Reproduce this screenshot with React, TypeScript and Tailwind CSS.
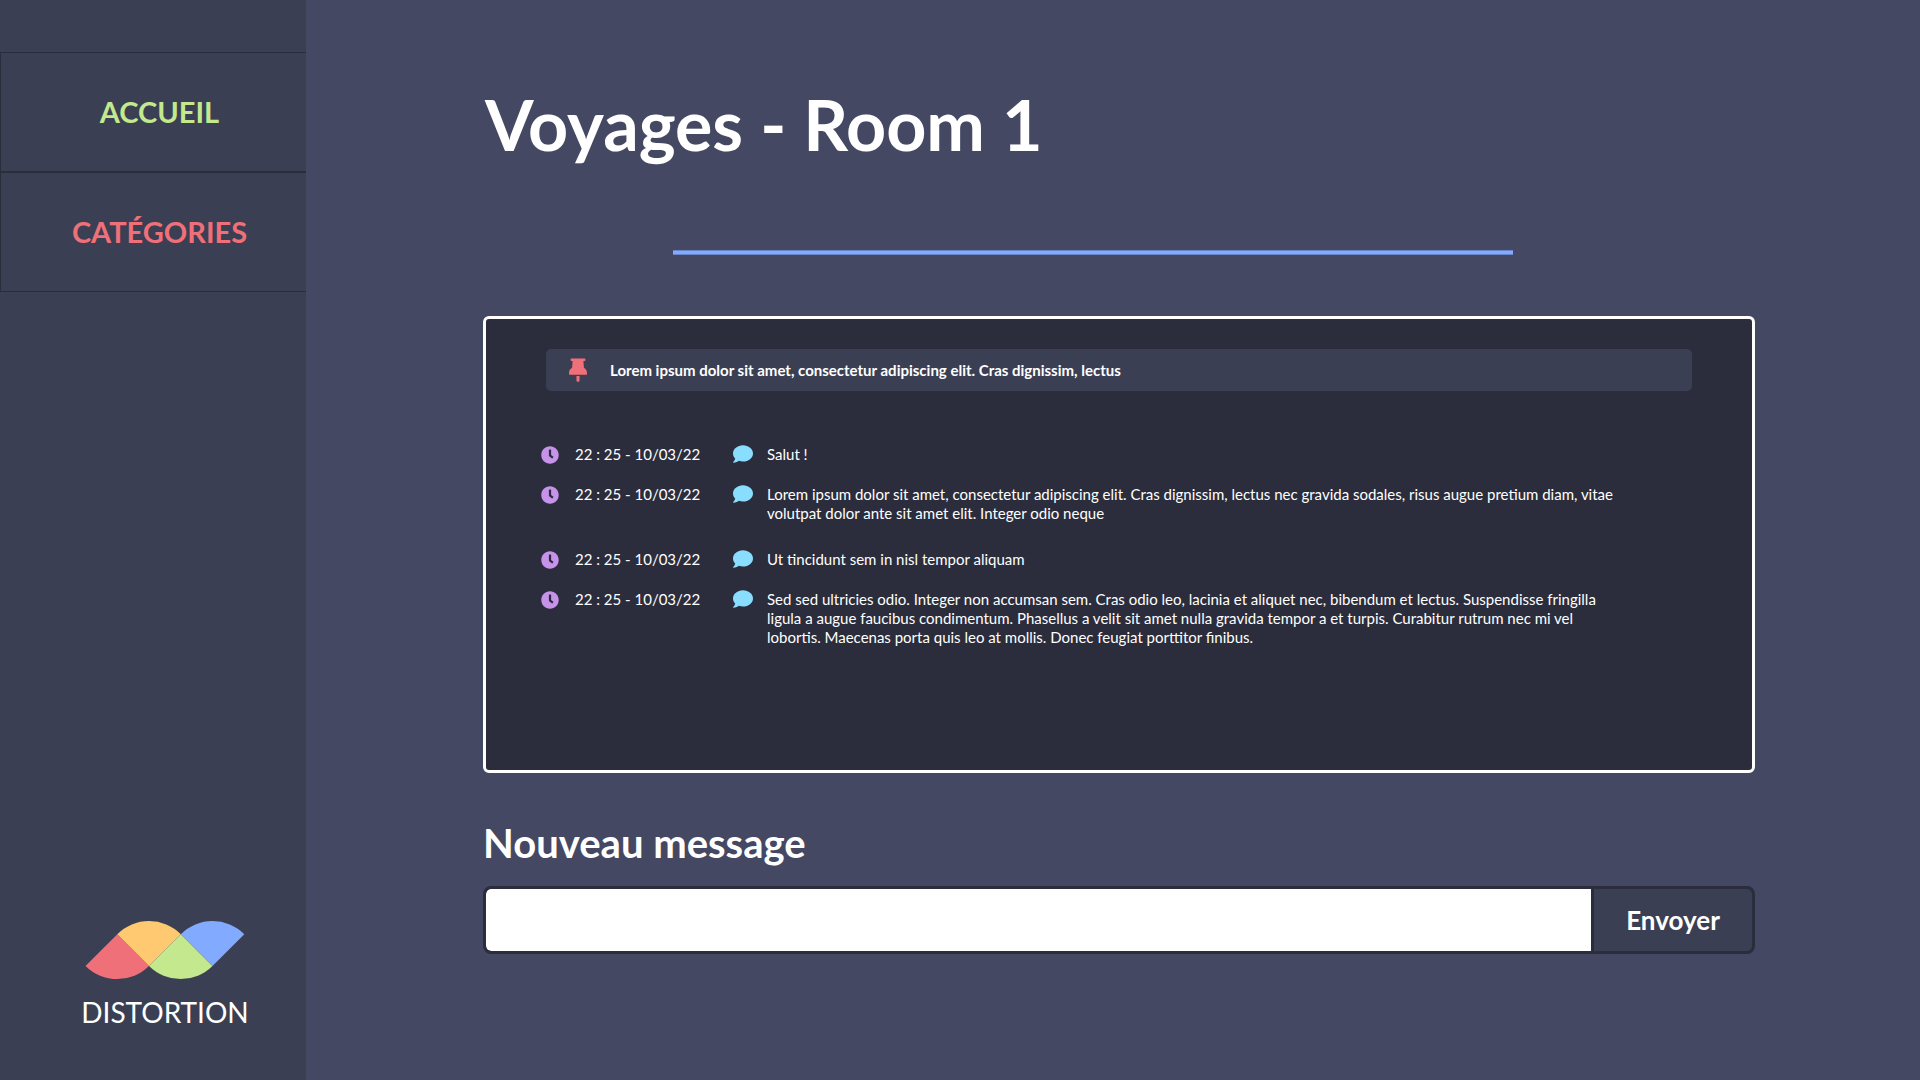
import { FaClock, FaComment } from "react-icons/fa";

type Message = { time: string; text: string; spacing: string };

const messages: Message[] = [
  { time: "22 : 25 - 10/03/22", text: "Salut !", spacing: "pb-5" },
  {
    time: "22 : 25 - 10/03/22",
    text: "Lorem ipsum dolor sit amet, consectetur adipiscing elit. Cras dignissim, lectus nec gravida sodales, risus augue pretium diam, vitae volutpat dolor ante sit amet elit. Integer odio neque",
    spacing: "pb-[26px]",
  },
  { time: "22 : 25 - 10/03/22", text: "Ut tincidunt sem in nisl tempor aliquam", spacing: "pb-5" },
  {
    time: "22 : 25 - 10/03/22",
    text: "Sed sed ultricies odio. Integer non accumsan sem. Cras odio leo, lacinia et aliquet nec, bibendum et lectus. Suspendisse fringilla ligula a augue faucibus condimentum. Phasellus a velit sit amet nulla gravida tempor a et turpis. Curabitur rutrum nec mi vel lobortis. Maecenas porta quis leo at mollis. Donec feugiat porttitor finibus.",
    spacing: "pb-[26px]",
  },
];

function PinIcon() {
  return (
    <svg width="18" height="24" viewBox="0 0 18 24" fill="currentColor" className="shrink-0 text-[#ef7078]" aria-hidden="true">
      <path d="M2.4 0.5h13.2a.8.8 0 0 1 .8.8v1a.8.8 0 0 1-.8.8h-1.2l.5 6.7c1.9 1 3.1 2.7 3.1 5.1v1a.8.8 0 0 1-.8.8H.8a.8.8 0 0 1-.8-.8v-1c0-2.4 1.2-4.1 3.1-5.1l.5-6.7H2.4a.8.8 0 0 1-.8-.8v-1a.8.8 0 0 1 .8-.8z" />
      <path d="M7.5 18h3v4.5a1.2 1.2 0 0 1-1.2 1.2h-.6a1.2 1.2 0 0 1-1.2-1.2z" />
    </svg>
  );
}

function Logo() {
  return (
    <div className="flex flex-col items-center">
      <svg width="160" height="60" viewBox="0 0 160 60" aria-hidden="true">
        <path d="M0.5 46 32.3 14.2 64 46A45 45 0 0 1 0.5 46Z" fill="#ef7078" />
        <path d="M64 46 32.3 14.2A45 45 0 0 1 95.8 14.2Z" fill="#fec970" />
        <path d="M64 46 95.8 14.2 127.5 46A45 45 0 0 1 64 46Z" fill="#c3e88d" />
        <path d="M127.5 46 95.8 14.2A45 45 0 0 1 159.3 14.2Z" fill="#82aaff" />
      </svg>
      <span className="mt-3 text-[28px] leading-10">DISTORTION</span>
    </div>
  );
}

export default function App() {
  return (
    <div className="flex min-h-screen bg-[#444862] font-['Lato',sans-serif] text-white">
      <aside className="flex w-[306px] shrink-0 flex-col justify-between bg-[#3b3f53] pt-[52px] pb-12">
        <nav className="text-[29px] font-bold">
          <a href="#accueil" className="flex h-[120px] items-center justify-center border border-r-0 border-[#2b2d3c] pl-3 text-[#c3e88d]">
            ACCUEIL
          </a>
          <a href="#categories" className="flex h-[120px] items-center justify-center border border-r-0 border-[#2b2d3c] pl-3 text-[#ef7078]">
            CATÉGORIES
          </a>
        </nav>
        <div className="pl-6">
          <Logo />
        </div>
      </aside>

      <main className="min-w-0 flex-1 pt-20 pr-[165px] pb-20 pl-[177px]">
        <h1 className="pl-0.5 text-[70px] leading-[88px] font-bold">Voyages - Room 1</h1>
        <hr className="mt-[82px] ml-[190px] h-[5px] w-[66%] border-y border-[#6a88c8] bg-[#82aaff]" />

        <section className="mt-[61px] min-h-[457px] rounded-md border-[3px] border-white bg-[#2b2d3c] pt-[30px]">
          <div className="mx-[60px] flex h-[42px] items-center rounded-[5px] bg-[#3b3f53] pl-[23px]">
            <PinIcon />
            <p className="ml-[23px] text-[15px] font-bold">Lorem ipsum dolor sit amet, consectetur adipiscing elit. Cras dignissim, lectus</p>
          </div>
          <ul className="mt-[53px] mr-[130px] ml-[55px] text-[15px] leading-[19px]">
            {messages.map((m, i) => (
              <li key={i} className={`flex items-start ${m.spacing}`}>
                <FaClock className="mt-0.5 size-[18px] shrink-0 text-[#c792ea]" />
                <time className="ml-4 w-[158px] shrink-0 pt-px">{m.time}</time>
                <FaComment className="size-5 shrink-0 text-[#89ddff]" />
                <p className="ml-[14px] pt-px">{m.text}</p>
              </li>
            ))}
          </ul>
        </section>

        <form className="mt-11" onSubmit={(e) => e.preventDefault()}>
          <label htmlFor="message" className="block text-[40px] leading-[52px] font-bold">
            Nouveau message
          </label>
          <div className="mt-[17px] flex h-[68px] overflow-hidden rounded-lg border-[3px] border-[#2b2d3c] bg-[#2b2d3c]">
            <input id="message" type="text" className="min-w-0 flex-1 rounded-l-[5px] bg-white px-4 text-[20px] text-[#2b2d3c] outline-none" />
            <button type="submit" className="w-[161px] border-l-[3px] border-[#2b2d3c] bg-[#3b3f53] text-[26px] font-bold">
              Envoyer
            </button>
          </div>
        </form>
      </main>
    </div>
  );
}
